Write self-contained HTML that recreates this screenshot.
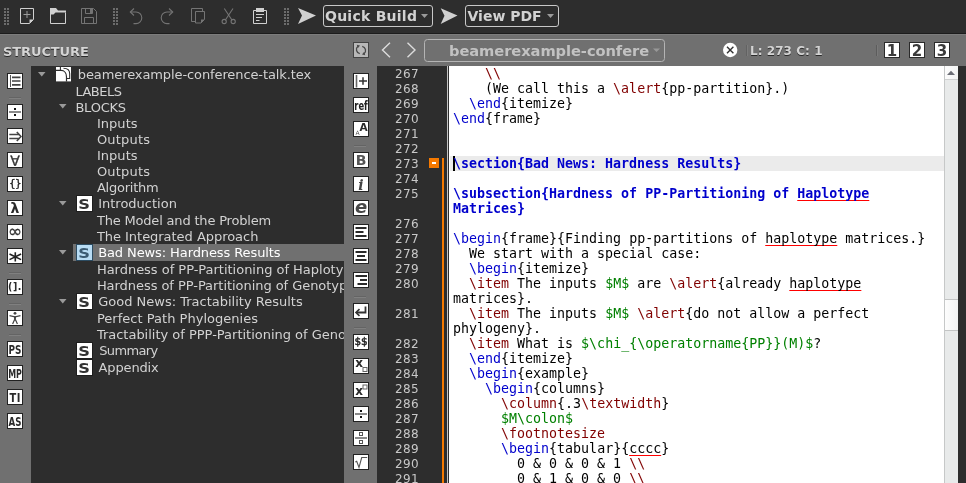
<!DOCTYPE html>
<html><head><meta charset="utf-8"><title>TeXstudio</title>
<style>
html,body{margin:0;padding:0;background:#2d2d2d;}
body{will-change:transform;width:966px;height:483px;overflow:hidden;position:relative;font-family:"DejaVu Sans","Liberation Sans",sans-serif;font-size:13px;color:#d2d2d2;}
.abs{position:absolute;}
#top{left:0;top:0;width:966px;height:33px;background:#2d2d2d;}
#band{left:0;top:33px;width:966px;height:33px;background:#707070;}
#lstrip{left:0;top:66px;width:31px;height:417px;background:#707070;}
#tree{left:31px;top:66px;width:313px;height:417px;background:#2d2d2d;overflow:hidden;}
#mstrip{left:344px;top:66px;width:33px;height:417px;background:#707070;}
#gutter{left:377px;top:66px;width:72px;height:417px;background:#2d2d2d;}
#edit{left:449px;top:66px;width:495px;height:417px;background:#fff;overflow:hidden;}
#sbar{left:944px;top:66px;width:14px;height:417px;background:#e8eaea;}
#redge{left:958px;top:66px;width:8px;height:417px;background:#2d2d2d;}
svg{position:absolute;overflow:visible;}
.tbtn{position:absolute;top:5px;height:20px;border:1px solid #c8c8c8;border-radius:3px;font-weight:bold;font-size:14px;line-height:20px;color:#d2d2d2;white-space:pre;}
.nb{position:absolute;top:9px;width:14px;height:14px;border:1px solid #2a2a2a;background:#fff;color:#3a3a3a;font-weight:bold;font-size:15px;line-height:17px;overflow:hidden;text-align:center;}
.shadow{text-shadow:0 1px 0 #2a2a2a;}
.row{position:absolute;left:0;white-space:pre;font-size:13px;line-height:16px;height:16px;color:#d2d2d2;letter-spacing:-0.1px;padding-top:1px;}
.row.i{height:17px;line-height:17px;padding-top:0;}
.ib{position:absolute;width:14px;height:14px;background:#fff;border:1px solid #222;color:#2a2a2a;overflow:hidden;}
.sep{position:absolute;height:1px;width:12px;}
.it{position:absolute;left:0;width:14px;text-align:center;line-height:14px;color:#2a2a2a;white-space:pre;}
.ln{position:absolute;right:30.100px;font-size:12px;line-height:15px;color:#c8c8c8;letter-spacing:0.37px;margin-top:1px;}
.cl{position:absolute;left:4px;white-space:pre;font-family:"DejaVu Sans Mono","Liberation Mono",monospace;font-size:13.30px;line-height:15px;height:15px;color:#000;}
.k{color:#0000cc;} .r{color:#800000;} .g{color:#008000;} .b{font-weight:bold;color:#0000cc;}
.u{text-decoration:underline;text-decoration-skip-ink:none;text-decoration-color:#f00;text-decoration-thickness:1px;text-underline-offset:2px;}
</style></head><body>
<div id="top" class="abs">
<svg width="966" height="33" viewBox="0 0 966 33" style="left:0;top:0">
<g fill="#6c6c6c"><rect x="4" y="8" width="2" height="2"/><rect x="7" y="8" width="2" height="2"/><rect x="4" y="11" width="2" height="2"/><rect x="7" y="11" width="2" height="2"/><rect x="4" y="14" width="2" height="2"/><rect x="7" y="14" width="2" height="2"/><rect x="4" y="17" width="2" height="2"/><rect x="7" y="17" width="2" height="2"/><rect x="4" y="20" width="2" height="2"/><rect x="7" y="20" width="2" height="2"/><rect x="4" y="23" width="2" height="2"/><rect x="7" y="23" width="2" height="2"/><rect x="113" y="8" width="2" height="2"/><rect x="116" y="8" width="2" height="2"/><rect x="113" y="11" width="2" height="2"/><rect x="116" y="11" width="2" height="2"/><rect x="113" y="14" width="2" height="2"/><rect x="116" y="14" width="2" height="2"/><rect x="113" y="17" width="2" height="2"/><rect x="116" y="17" width="2" height="2"/><rect x="113" y="20" width="2" height="2"/><rect x="116" y="20" width="2" height="2"/><rect x="113" y="23" width="2" height="2"/><rect x="116" y="23" width="2" height="2"/><rect x="284" y="8" width="2" height="2"/><rect x="287" y="8" width="2" height="2"/><rect x="284" y="11" width="2" height="2"/><rect x="287" y="11" width="2" height="2"/><rect x="284" y="14" width="2" height="2"/><rect x="287" y="14" width="2" height="2"/><rect x="284" y="17" width="2" height="2"/><rect x="287" y="17" width="2" height="2"/><rect x="284" y="20" width="2" height="2"/><rect x="287" y="20" width="2" height="2"/><rect x="284" y="23" width="2" height="2"/><rect x="287" y="23" width="2" height="2"/></g>
<!-- new document -->
<g fill="none" stroke="#d0d0d0" stroke-width="1">
<path d="M20.5 8.5h13v11l-4 4h-9z"/>
<path d="M27 11v7M23.5 14.500h7" stroke="#9a9a9a"/>
</g>
<path d="M29.500 19.500h4l-4 4z" fill="#d0d0d0"/>
<!-- folder -->
<path d="M50 8h6l2 2.500h8v2h-10.500l-2 2h-3.500z" fill="#d0d0d0"/>
<path d="M50.500 14v9.500h15v-11" fill="none" stroke="#d0d0d0"/>
<!-- save (dim) -->
<g fill="none" stroke="#747474"><path d="M81.500 8.500h12l3 3v12h-15z"/><path d="M85.500 8.500v5h7v-5"/><path d="M84.500 23.500v-6h9v6"/></g>
<rect x="90" y="9" width="2" height="4" fill="#747474"/>
<!-- undo -->
<g fill="none" stroke="#747474" stroke-width="1.100"><path d="M130.500 12h5.500a5.800 5.800 0 0 1 0 11.600h-2.500"/><path d="M134 8.500l-3.700 3.500l3.700 3.500"/></g>
<!-- redo -->
<g fill="none" stroke="#747474" stroke-width="1.100"><path d="M172.500 12h-5.500a5.800 5.800 0 0 0 0 11.600h2.500"/><path d="M169 8.500l3.700 3.500l-3.700 3.500"/></g>
<!-- copy -->
<g fill="none" stroke="#747474"><path d="M195 21.500h-3.500v-13h11v3"/><path d="M195.500 11.500h9v8l-3.500 3.500h-5.500z"/></g>
<path d="M201 19.500h3.500l-3.500 3.500z" fill="#747474"/>
<!-- cut -->
<g fill="none" stroke="#747474" stroke-width="1.100"><path d="M224.300 8.500l7.800 11.800M233 8.500l-7.800 11.800"/><circle cx="224.200" cy="21.500" r="2.100"/><circle cx="233.200" cy="21.500" r="2.100"/></g>
<!-- paste -->
<path d="M256 8h8v4h-8z" fill="#d0d0d0"/>
<path d="M253.500 10.500h13v13h-13z" fill="none" stroke="#d0d0d0"/>
<path d="M256 14.500h8M256 17.500h6M256 20.500h3.500" stroke="#d0d0d0" fill="none"/>
<!-- arrows -->
<path d="M298 8l18 7.500l-18 8.500l4-8.500z" fill="#d0d0d0"/>
<path d="M440.700 8.200l16.800 7.400l-16.800 8.400l3.800-8.300z" fill="#d0d0d0"/>
<!-- dropdown triangles -->
<path d="M421 14h7l-3.500 4z" fill="#9a9a9a"/>
<path d="M547 14h7l-3.500 4z" fill="#9a9a9a"/>
</svg>
<div class="tbtn" style="left:323px;padding-left:1px;width:107px;letter-spacing:0.25px">Quick Build</div>
<div class="tbtn" style="left:465px;width:90.500px;padding-left:1.500px">View PDF</div>

</div>
<div id="band" class="abs">
<div class="abs" style="left:0;top:0;width:966px;height:1px;background:#1c1c1c"></div>
<div class="abs" style="left:0;top:1px;width:966px;height:1px;background:#7c7c7c"></div>
<div class="abs shadow" style="left:3px;top:11px;letter-spacing:-0.1px;font-weight:bold;font-size:13px;line-height:16px;color:#d4d4d4;white-space:pre">STRUCTURE</div>
<svg width="966" height="33" viewBox="0 33 966 33" style="left:0;top:0">
<!-- refresh -->
<rect x="353.500" y="42.500" width="15" height="15" fill="#b8b8b8" stroke="#444"/>
<g fill="none" stroke="#4a4a4a" stroke-width="1.300"><path d="M359.800 53.600a4.200 4.200 0 0 1-1.800-7.400"/><path d="M362.200 46.400a4.200 4.200 0 0 1 1.800 7.400"/></g>
<path d="M356.800 44.800l3.200 0.800l-2.200 2.600z" fill="#4a4a4a"/><path d="M365.200 55.200l-3.200-0.800l2.200-2.600z" fill="#4a4a4a"/>
<!-- chevrons -->
<path d="M390 42.800l-7.500 7.200l7.500 7.200" fill="none" stroke="#dcdcdc" stroke-width="1.400"/>
<path d="M407.500 42.800l7.500 7.200l-7.500 7.200" fill="none" stroke="#dcdcdc" stroke-width="1.400"/>
<!-- tab box -->
<rect x="424.500" y="39.500" width="240" height="22" rx="3" fill="none" stroke="#b4b4b4"/>
<path d="M653 48.500h7l-3.500 3.500z" fill="#989898"/>
<!-- close -->
<circle cx="730.200" cy="50" r="7.200" fill="#fff"/>
<path d="M727 46.800l6.400 6.400M733.400 46.800l-6.400 6.400" stroke="#333" stroke-width="1.400" fill="none"/>
<!-- seps -->
<path d="M746.500 45v11" stroke="#626262"/><path d="M747.500 45v11" stroke="#7c7c7c"/>
<path d="M876.500 45v11" stroke="#5c5c5c"/><path d="M877.500 45v11" stroke="#7a7a7a"/>
</svg>
<div class="abs" style="left:449px;top:8px;letter-spacing:-0.07px;font-weight:bold;font-size:14.667px;line-height:20px;color:#c2c2c2;white-space:pre">beamerexample-confere</div>
<div class="abs shadow" style="left:750px;top:10px;letter-spacing:0.05px;font-weight:bold;font-size:12px;line-height:16px;color:#d4d4d4;white-space:pre">L: 273 C: 1</div>
<div class="nb" style="left:884px">1</div><div class="nb" style="left:909px">2</div><div class="nb" style="left:934px">3</div>

</div>
<div id="lstrip" class="abs">
<div class="ib" style="left:7px;top:7px"><svg width="14" height="14" viewBox="0 0 14 14" style="left:0;top:0"><path d="M2.500 1v12" stroke="#555" fill="none"/><path d="M4 3.300h8.500M4 7h8.500M4 10.800h8.500" stroke="#444" stroke-width="1.700" fill="none"/></svg></div>
<div class="sep" style="left:9px;top:31px;background:#646464"></div><div class="sep" style="left:9px;top:32px;background:#808080"></div>
<div class="ib" style="left:7px;top:38px"><svg width="14" height="14" viewBox="0 0 14 14" style="left:0;top:0"><rect x="1" y="6" width="12" height="2" fill="#8a8a8a"/><rect x="6" y="3" width="2" height="2" fill="#111"/><rect x="6" y="9" width="2" height="2" fill="#111"/></svg></div>
<div class="ib" style="left:7px;top:62px"><svg width="14" height="14" viewBox="0 0 14 14" style="left:0;top:0"><path d="M1.300 5.500h10M1.300 9.500h10" stroke="#444" stroke-width="1.500" fill="none"/><path d="M8.800 3l4.200 4.500l-4.200 4.500" stroke="#444" stroke-width="1.600" fill="none"/></svg></div>
<div class="ib" style="left:7px;top:86px"><span class="it" style="font-size:14px;top:1px;color:#333;-webkit-text-stroke:0.3px #333">∀</span></div>
<div class="ib" style="left:7px;top:110px"><span class="it" style="font-size:10.500px;top:-1px;letter-spacing:-0.8px;color:#222;-webkit-text-stroke:0.3px #222">{}</span></div>
<div class="ib" style="left:7px;top:134px"><span class="it" style="font-weight:bold;font-size:14px;top:0px">λ</span></div>
<div class="ib" style="left:7px;top:158px"><span class="it" style="font-size:17px;top:-1px;left:-3px;width:20px;color:#333;-webkit-text-stroke:0.3px #333">∞</span></div>
<div class="ib" style="left:7px;top:182px"><svg width="14" height="14" viewBox="0 0 14 14" style="left:0;top:0"><path d="M7.300 3.300v9.100M1.500 5l11.600 5.600M13.100 5l-11.600 5.600" stroke="#222" stroke-width="1.600" fill="none"/></svg></div>
<div class="sep" style="left:9px;top:206px;background:#646464"></div><div class="sep" style="left:9px;top:207px;background:#808080"></div>
<div class="ib" style="left:7px;top:213px"><span class="it" style="font-weight:bold;font-size:11px;top:0px;left:-8px;width:30px;letter-spacing:0.6px;transform:scaleX(0.86)">(].</span></div>
<div class="sep" style="left:9px;top:237px;background:#646464"></div><div class="sep" style="left:9px;top:238px;background:#808080"></div>
<div class="ib" style="left:7px;top:244px"><svg width="14" height="14" viewBox="0 0 14 14" style="left:0;top:0"><circle cx="7" cy="2.300" r="1.400" fill="#444"/><path d="M1.500 4.600l5.500 1.300l5.500-1.300" stroke="#444" stroke-width="1.100" fill="none"/><path d="M5.900 5.500h2.200l-0.300 4h-1.600z" fill="#444"/><path d="M6.600 8.500l-2 4.500M7.400 8.500l2 4.500" stroke="#444" stroke-width="1.200" fill="none"/></svg></div>
<div class="sep" style="left:9px;top:268px;background:#646464"></div><div class="sep" style="left:9px;top:269px;background:#808080"></div>
<div class="ib" style="left:7px;top:275px"><span class="it" style="font-weight:bold;font-size:12px;top:1px;left:-8px;width:30px;color:#2a2a2a;letter-spacing:0px;transform:translateX(0px) scaleX(0.74)">PS</span></div>
<div class="ib" style="left:7px;top:299px"><span class="it" style="font-weight:bold;font-size:12px;top:1px;left:-8px;width:30px;color:#2a2a2a;letter-spacing:0px;transform:translateX(0px) scaleX(0.66)">MP</span></div>
<div class="ib" style="left:7px;top:323px"><span class="it" style="font-weight:bold;font-size:12px;top:1px;left:-8px;width:30px;color:#2a2a2a;letter-spacing:0.8px;transform:translateX(0.3px) scaleX(0.82)">TI</span></div>
<div class="ib" style="left:7px;top:347px"><span class="it" style="font-weight:bold;font-size:12px;top:1px;left:-8px;width:30px;color:#2a2a2a;letter-spacing:0px;transform:translateX(0px) scaleX(0.72)">AS</span></div>
</div>
<div id="tree" class="abs">
<svg width="8" height="5" viewBox="0 0 8 5" style="left:6.700000000000003px;top:5.8px"><path d="M0 0h7.500l-3.750 4.400z" fill="#9a9a9a"/></svg>
<svg width="16" height="15" viewBox="0 0 16 15" style="left:25px;top:1px"><path d="M0 0h15v14.400h-15z" fill="#fff"/><path d="M0 3.400h5c3.500 0 5.500 3 5.500 6.500v4.600" fill="none" stroke="#2d2d2d" stroke-width="1.200"/><path d="M4.400 0v3M7.500 1.300c4 0 6.200 2 6.200 5.500v4.700h-3.400" fill="none" stroke="#2d2d2d" stroke-width="1.100"/></svg>
<div class="row i" style="left:46.8px;top:0px;color:#d2d2d2;letter-spacing:-0.1px">beamerexample-conference-talk.tex</div>
<div class="row" style="left:44.4px;top:17px;color:#d2d2d2;letter-spacing:-0.5px">LABELS</div>
<svg width="8" height="5" viewBox="0 0 8 5" style="left:27.700000000000003px;top:38.3px"><path d="M0 0h7.500l-3.750 4.400z" fill="#9a9a9a"/></svg>
<div class="row" style="left:44.4px;top:33px;color:#d2d2d2;letter-spacing:-0.22px">BLOCKS</div>
<div class="row" style="left:65.9px;top:49px;color:#d2d2d2;letter-spacing:0.05px">Inputs</div>
<div class="row" style="left:65.9px;top:65px;color:#d2d2d2;letter-spacing:0.2px">Outputs</div>
<div class="row" style="left:65.9px;top:81px;color:#d2d2d2;letter-spacing:0.05px">Inputs</div>
<div class="row" style="left:65.9px;top:97px;color:#d2d2d2;letter-spacing:0.2px">Outputs</div>
<div class="row" style="left:65.9px;top:113px;color:#d2d2d2;letter-spacing:-0.23px">Algorithm</div>
<svg width="8" height="5" viewBox="0 0 8 5" style="left:27.700000000000003px;top:134.8px"><path d="M0 0h7.500l-3.750 4.400z" fill="#9a9a9a"/></svg>
<div class="abs" style="left:46px;top:130px;width:15px;height:14.500px;background:#fff;box-shadow:0 0 0 1px #1e1e1e;color:#333;font-weight:bold;font-size:14.500px;line-height:16px;text-align:center"><span style="display:inline-block;transform:scaleX(1.12)">S</span></div>
<div class="row i" style="left:67.2px;top:129px;color:#d2d2d2;letter-spacing:0.0px">Introduction</div>
<div class="row" style="left:65.9px;top:146px;color:#d2d2d2;letter-spacing:-0.18px">The Model and the Problem</div>
<div class="row" style="left:65.9px;top:162px;color:#d2d2d2;letter-spacing:-0.035px">The Integrated Approach</div>
<div class="abs" style="left:42px;top:178px;width:271px;height:17px;background:#707070"></div>
<svg width="8" height="5" viewBox="0 0 8 5" style="left:27.700000000000003px;top:183.8px"><path d="M0 0h7.500l-3.750 4.400z" fill="#9a9a9a"/></svg>
<div class="abs" style="left:46px;top:179px;width:15px;height:14.500px;background:#b8dcf4;box-shadow:0 0 0 1px #2c4c62;color:#3b5b73;font-weight:bold;font-size:14.500px;line-height:16px;text-align:center"><span style="display:inline-block;transform:scaleX(1.12)">S</span></div>
<div class="row i" style="left:67.2px;top:178px;color:#ffffff;letter-spacing:-0.1px">Bad News: Hardness Results</div>
<div class="row" style="left:65.9px;top:195px;color:#d2d2d2;letter-spacing:-0.02px">Hardness of PP-Partitioning of Haplotype Matrices</div>
<div class="row" style="left:65.9px;top:211px;color:#d2d2d2;letter-spacing:-0.05px">Hardness of PP-Partitioning of Genotype Matrices</div>
<svg width="8" height="5" viewBox="0 0 8 5" style="left:27.700000000000003px;top:232.8px"><path d="M0 0h7.500l-3.750 4.400z" fill="#9a9a9a"/></svg>
<div class="abs" style="left:46px;top:228px;width:15px;height:14.500px;background:#fff;box-shadow:0 0 0 1px #1e1e1e;color:#333;font-weight:bold;font-size:14.500px;line-height:16px;text-align:center"><span style="display:inline-block;transform:scaleX(1.12)">S</span></div>
<div class="row i" style="left:67.2px;top:227px;color:#d2d2d2;letter-spacing:0.0px">Good News: Tractability Results</div>
<div class="row" style="left:65.9px;top:244px;color:#d2d2d2;letter-spacing:0.025px">Perfect Path Phylogenies</div>
<div class="row" style="left:65.9px;top:260px;color:#d2d2d2;letter-spacing:-0.01px">Tractability of PPP-Partitioning of Genotype Matrices</div>
<div class="abs" style="left:46px;top:277px;width:15px;height:14.500px;background:#fff;box-shadow:0 0 0 1px #1e1e1e;color:#333;font-weight:bold;font-size:14.500px;line-height:16px;text-align:center"><span style="display:inline-block;transform:scaleX(1.12)">S</span></div>
<div class="row i" style="left:68.2px;top:276px;color:#d2d2d2;letter-spacing:-0.65px">Summary</div>
<div class="abs" style="left:46px;top:294px;width:15px;height:14.500px;background:#fff;box-shadow:0 0 0 1px #1e1e1e;color:#333;font-weight:bold;font-size:14.500px;line-height:16px;text-align:center"><span style="display:inline-block;transform:scaleX(1.12)">S</span></div>
<div class="row i" style="left:67.6px;top:293px;color:#d2d2d2;letter-spacing:-0.15px">Appendix</div>
</div>
<div id="mstrip" class="abs">
<div class="ib" style="left:9px;top:7px"><svg width="14" height="14" viewBox="0 0 14 14" style="left:0;top:0"><path d="M2.500 1v12.500" stroke="#666" stroke-width="1.600" fill="none"/><path d="M5 7h8M9 3.200v7.600" stroke="#333" stroke-width="1.500" fill="none"/></svg></div>
<div class="ib" style="left:9px;top:31px"><span class="it" style="font-weight:bold;font-size:12.500px;top:1px;left:-3px;width:20px;transform:scaleX(0.67);color:#222">ref</span></div>
<div class="ib" style="left:9px;top:55px"><span class="it" style="font-weight:bold;font-size:10.500px;top:-2px;left:4px;width:11px">A</span><span class="it" style="font-size:6px;top:8px;left:-2px;width:11px;line-height:6px;color:#555">A</span></div>
<div class="sep" style="left:10px;top:79px;background:#646464"></div><div class="sep" style="left:10px;top:80px;background:#808080"></div>
<div class="ib" style="left:9px;top:86px"><span class="it" style="font-weight:bold;font-size:14px;top:0px;color:#555">B</span></div>
<div class="ib" style="left:9px;top:110px"><span class="it" style="font-weight:bold;font-style:italic;font-size:14px;top:1px;font-family:'DejaVu Serif','Liberation Serif',serif;color:#444">i</span></div>
<div class="ib" style="left:9px;top:134px"><span class="it" style="font-weight:bold;font-style:italic;font-size:18px;top:-1px;left:-3px;width:20px;color:#484848">e</span></div>
<div class="ib" style="left:9px;top:158px"><svg width="14" height="14" viewBox="0 0 14 14" style="left:0;top:0"><path d="M1.500 3h11M1.500 7h8M1.500 11h11" stroke="#2a2a2a" stroke-width="2" fill="none"/></svg></div>
<div class="ib" style="left:9px;top:182px"><svg width="14" height="14" viewBox="0 0 14 14" style="left:0;top:0"><path d="M1.500 3h11M3 7h8M1.500 11h11" stroke="#2a2a2a" stroke-width="2" fill="none"/></svg></div>
<div class="ib" style="left:9px;top:206px"><svg width="14" height="14" viewBox="0 0 14 14" style="left:0;top:0"><path d="M1.500 3h11.500M6 7h7M3.500 11h9.500" stroke="#2a2a2a" stroke-width="2" fill="none"/></svg></div>
<div class="sep" style="left:10px;top:230px;background:#646464"></div><div class="sep" style="left:10px;top:231px;background:#808080"></div>
<div class="ib" style="left:9px;top:237px"><svg width="14" height="14" viewBox="0 0 14 14" style="left:0;top:0"><path d="M11.500 2.500v6h-8.500" stroke="#333" stroke-width="1.800" fill="none"/><path d="M5.500 5.200l-3.500 3.300l3.500 3.300" stroke="#333" stroke-width="1.600" fill="none"/></svg></div>
<div class="sep" style="left:10px;top:261px;background:#646464"></div><div class="sep" style="left:10px;top:262px;background:#808080"></div>
<div class="ib" style="left:9px;top:268px"><span class="it" style="font-size:10.500px;top:-1px;left:-3px;width:20px;letter-spacing:-0.2px;color:#222;-webkit-text-stroke:0.45px #222">$$</span></div>
<div class="ib" style="left:9px;top:292px"><span class="it" style="font-weight:bold;font-size:12px;top:-3px;left:-2px">x</span><svg width="14" height="14" viewBox="0 0 14 14" style="left:0;top:0"><rect x="9" y="8.500" width="4" height="4" fill="#fff" stroke="#666" stroke-width="1"/></svg></div>
<div class="ib" style="left:9px;top:316px"><span class="it" style="font-weight:bold;font-size:12px;top:1px;left:-2px">x</span><svg width="14" height="14" viewBox="0 0 14 14" style="left:0;top:0"><rect x="9" y="2" width="4" height="4" fill="#fff" stroke="#666" stroke-width="1"/></svg></div>
<div class="ib" style="left:9px;top:340px"><svg width="14" height="14" viewBox="0 0 14 14" style="left:0;top:0"><rect x="1" y="6" width="12" height="2" fill="#8a8a8a"/><rect x="6" y="3" width="2" height="2" fill="#111"/><rect x="6" y="9" width="2" height="2" fill="#111"/></svg></div>
<div class="ib" style="left:9px;top:364px"><svg width="14" height="14" viewBox="0 0 14 14" style="left:0;top:0"><rect x="1" y="6" width="12" height="2" fill="#8a8a8a"/><rect x="5.500" y="1.500" width="3" height="3" fill="#fff" stroke="#555"/><rect x="5.500" y="9.500" width="3" height="3" fill="#fff" stroke="#555"/></svg></div>
<div class="ib" style="left:9px;top:388px"><svg width="14" height="14" viewBox="0 0 14 14" style="left:0;top:0"><path d="M1.300 7l1.400-0.700l2.300 6.200l2.700-10h5.500" stroke="#555" stroke-width="1.100" fill="none"/></svg></div>
</div>
<div id="gutter" class="abs">
<div class="ln" style="top:0px">267</div>
<div class="ln" style="top:15px">268</div>
<div class="ln" style="top:30px">269</div>
<div class="ln" style="top:45px">270</div>
<div class="ln" style="top:60px">271</div>
<div class="ln" style="top:75px">272</div>
<div class="ln" style="top:90px">273</div>
<div class="ln" style="top:105px">274</div>
<div class="ln" style="top:120px">275</div>
<div class="ln" style="top:150px">276</div>
<div class="ln" style="top:165px">277</div>
<div class="ln" style="top:180px">278</div>
<div class="ln" style="top:195px">279</div>
<div class="ln" style="top:210px">280</div>
<div class="ln" style="top:240px">281</div>
<div class="ln" style="top:270px">282</div>
<div class="ln" style="top:285px">283</div>
<div class="ln" style="top:300px">284</div>
<div class="ln" style="top:315px">285</div>
<div class="ln" style="top:330px">286</div>
<div class="ln" style="top:345px">287</div>
<div class="ln" style="top:360px">288</div>
<div class="ln" style="top:375px">289</div>
<div class="ln" style="top:390px">290</div>
<div class="ln" style="top:405px">291</div>
<div class="abs" style="left:52px;top:92px;width:10px;height:10px;background:#f57900"></div>
<div class="abs" style="left:55px;top:96px;width:4px;height:2px;background:#fff"></div>
<div class="abs" style="left:65px;top:92px;width:2px;height:325px;background:#f57900"></div>
<div class="abs" style="left:70px;top:0;width:1px;height:417px;background:#c4c4c4"></div>

</div>
<div id="edit" class="abs">
<div class="cl" style="top:0px">    <span class="r">\\</span></div>
<div class="cl" style="top:15px">    (We call this a <span class="r">\alert</span>{pp-partition}.)</div>
<div class="cl" style="top:30px">  <span class="k">\end</span>{itemize}</div>
<div class="cl" style="top:45px"><span class="k">\end</span>{frame}</div>
<div class="abs" style="left:1px;top:90px;width:494px;height:15px;background:#ebebeb"></div>
<div class="abs" style="left:4px;top:90px;width:2px;height:15px;background:#000"></div>
<div class="cl" style="top:90px"><span class="b">\section{Bad News: Hardness Results}</span></div>
<div class="cl" style="top:120px"><span class="b">\subsection{Hardness of PP-Partitioning of </span><span class="b u">Haplotype</span><span class="b"> </span></div>
<div class="cl" style="top:135px"><span class="b">Matrices}</span></div>
<div class="cl" style="top:165px"><span class="k">\begin</span>{frame}{Finding pp-partitions of <span class="u">haplotype</span> matrices.}</div>
<div class="cl" style="top:180px">  We start with a special case:</div>
<div class="cl" style="top:195px">  <span class="k">\begin</span>{itemize}</div>
<div class="cl" style="top:210px">  <span class="r">\item</span> The inputs <span class="g">$M$</span> are <span class="r">\alert</span>{already <span class="u">haplotype</span></div>
<div class="cl" style="top:225px">matrices}.</div>
<div class="cl" style="top:240px">  <span class="r">\item</span> The inputs <span class="g">$M$</span> <span class="r">\alert</span>{do not allow a perfect</div>
<div class="cl" style="top:255px">phylogeny}.</div>
<div class="cl" style="top:270px">  <span class="r">\item</span> What is <span class="g">$\chi_{\operatorname{PP}}(M)$</span>?</div>
<div class="cl" style="top:285px">  <span class="k">\end</span>{itemize}</div>
<div class="cl" style="top:300px">  <span class="k">\begin</span>{example}</div>
<div class="cl" style="top:315px">    <span class="k">\begin</span>{columns}</div>
<div class="cl" style="top:330px">      <span class="r">\column</span>{.3<span class="r">\textwidth</span>}</div>
<div class="cl" style="top:345px">      <span class="g">$M\colon$</span></div>
<div class="cl" style="top:360px">      <span class="r">\footnotesize</span></div>
<div class="cl" style="top:375px">      <span class="k">\begin</span>{tabular}{<span class="u">cccc</span>}</div>
<div class="cl" style="top:390px">        0 &amp; 0 &amp; 0 &amp; 1 <span class="r">\\</span></div>
<div class="cl" style="top:405px">        0 &amp; 1 &amp; 0 &amp; 0 <span class="r">\\</span></div>
</div>
<div id="sbar" class="abs">
<div class="abs" style="left:0;top:0;width:1px;height:417px;background:#c6c8c8"></div>
<div class="abs" style="left:1px;top:0;width:13px;height:13px;background:linear-gradient(90deg,#fcfcfc,#f3f4f4);border-bottom:1px solid #cfd1d1"></div>
<svg width="14" height="14" viewBox="0 0 14 14" style="left:0;top:0"><path d="M3 9h8l-4-4.200z" fill="#6c6e76"/></svg>
<div class="abs" style="left:1px;top:233px;width:13px;height:30px;background:linear-gradient(90deg,#fdfdfd,#f1f2f2);border-top:1px solid #c2c4c4;border-bottom:1px solid #c2c4c4"></div>

</div>
<div id="redge" class="abs"></div>
</body></html>
